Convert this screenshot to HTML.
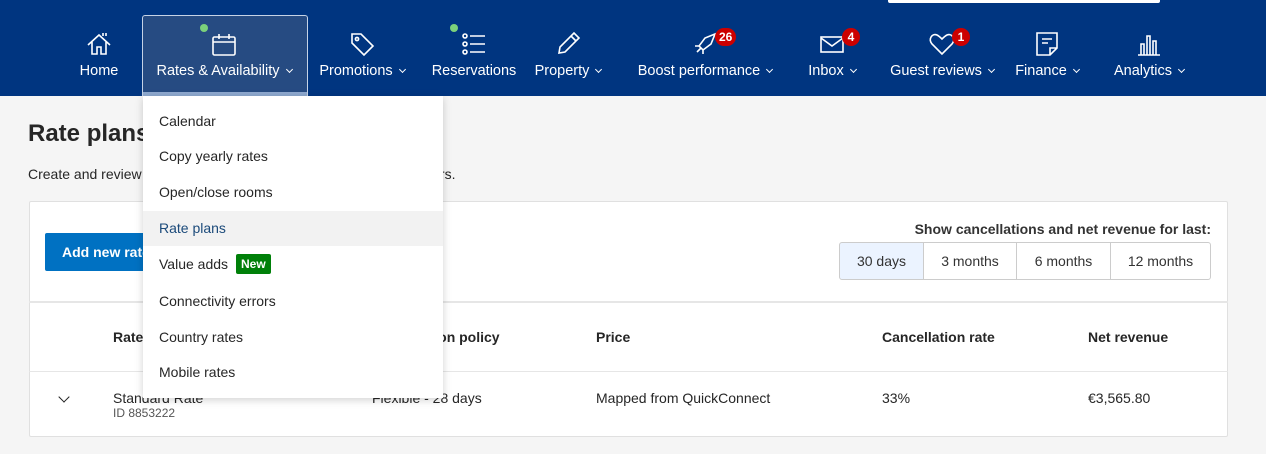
<!DOCTYPE html>
<html><head><meta charset="utf-8"><style>
*{margin:0;padding:0;box-sizing:border-box}
body{width:1266px;height:454px;overflow:hidden;background:#f5f5f5;font-family:"Liberation Sans",Arial,sans-serif;color:#262626;position:relative}
.nav{position:absolute;left:0;top:0;width:1266px;height:96px;background:#003580}
.it{position:absolute;top:0;width:200px;height:96px;text-align:center;color:#fff}
.it svg{position:absolute;left:86px;top:30px;width:28px;height:28px}
.it .lb{position:absolute;left:0;right:0;top:63px;font-size:14.5px;line-height:17px;white-space:nowrap}
.chev{display:inline-block;width:5px;height:5px;border-right:1px solid #fff;border-bottom:1px solid #fff;transform:rotate(45deg);margin-left:7px;position:relative;top:-3px}
.badge{position:absolute;top:28px;height:18px;min-width:18px;padding:0 4px;border-radius:9px;background:#cc0000;color:#fff;font-size:12px;font-weight:bold;line-height:18px;text-align:center}
.dot{position:absolute;width:8px;height:8px;border-radius:50%;background:#7bd17b}
.active{position:absolute;left:142px;top:15px;width:166px;height:81px;background:#264b82;border:1px solid #c6d3e6;border-bottom:none;border-radius:3px 3px 0 0}
.active .bar{position:absolute;left:0;right:0;bottom:0;height:4px;background:#8ea9cf}
.dd{position:absolute;left:143px;top:96px;width:300px;height:302px;background:#fff;box-shadow:0 2px 8px rgba(0,0,0,.18);z-index:5}
.dd div{position:absolute;left:0;width:300px;height:35px;padding-left:16px;line-height:35px;font-size:14px;color:#262626}
.new{display:inline-block;background:#008009;color:#fff;font-size:12px;font-weight:bold;line-height:20px;padding:0 5px;border-radius:2px;margin-left:8px;vertical-align:1px}
.t{position:absolute;white-space:nowrap}
.card{position:absolute;left:29px;top:201px;width:1199px;height:236px;background:#fff;border:1px solid #e0e0e0;border-radius:2px}
.seg{position:absolute;top:242px;height:38px;border:1px solid #ccc;line-height:36px;text-align:center;font-size:14px;color:#333;background:#fff}
</style></head><body>
<div class="nav">
<div style="position:absolute;left:888px;top:0;width:272px;height:3px;background:#fff;border-radius:0 0 2px 2px"></div>
<div class="active"><div class="bar"></div></div>

<div class="it" style="left:-1px"><svg viewBox="0 0 28 28" fill="none" stroke="#fff" stroke-width="1.6"><path d="M3 15 L14 5 L25 15 M7 12 V24 H12 V17 H16 V24 H21 V12"/><path d="M18 6 V3 M21 6 V3"/></svg><div class="lb">Home</div></div>

<div class="it" style="left:124px"><svg viewBox="0 0 28 28" fill="none" stroke="#fff" stroke-width="1.6"><rect x="3" y="7" width="22" height="18" rx="1.5"/><path d="M3 12 H25 M9 4 V9 M19 4 V9"/></svg><div class="dot" style="left:76px;top:24px"></div><div class="lb">Rates &amp; Availability<span class="chev"></span></div></div>

<div class="it" style="left:262px"><svg viewBox="0 0 28 28" fill="none" stroke="#fff" stroke-width="1.6"><path d="M4 4 H13 L25 16 L16 25 L4 13 Z"/><circle cx="9" cy="9" r="1.6"/></svg><div class="lb">Promotions<span class="chev"></span></div></div>

<div class="it" style="left:374px"><svg viewBox="0 0 28 28" fill="none" stroke="#fff" stroke-width="1.6"><circle cx="5" cy="6" r="2"/><circle cx="5" cy="14" r="2"/><circle cx="5" cy="22" r="2"/><path d="M10 6 H25 M10 14 H25 M10 22 H25"/></svg><div class="dot" style="left:76px;top:24px"></div><div class="lb">Reservations</div></div>

<div class="it" style="left:468px"><svg viewBox="0 0 28 28" fill="none" stroke="#fff" stroke-width="1.6"><path d="M5 23 L6 17 L20 3 L25 8 L11 22 Z M17 6 L22 11"/></svg><div class="lb">Property<span class="chev"></span></div></div>

<div class="it" style="left:605px"><svg viewBox="0 0 28 28" fill="none" stroke="#fff" stroke-width="1.6"><path d="M24 4 L14 8 L8 16 L12 20 L20 14 Z M8 16 L4 16 M12 20 L12 24 M6 22 L10 18"/></svg><div class="badge" style="left:110px">26</div><div class="lb">Boost performance<span class="chev"></span></div></div>

<div class="it" style="left:732px"><svg viewBox="0 0 28 28" fill="none" stroke="#fff" stroke-width="1.6"><rect x="3" y="7" width="22" height="15"/><path d="M3 8 L14 16 L25 8"/></svg><div class="badge" style="left:110px">4</div><div class="lb">Inbox<span class="chev"></span></div></div>

<div class="it" style="left:842px"><svg viewBox="0 0 28 28" fill="none" stroke="#fff" stroke-width="1.6"><path d="M14 24 L4 14 C0 9 4 3 9 5 C11 6 13 8 14 9 C15 8 17 6 19 5 C24 3 28 9 24 14 Z"/></svg><div class="badge" style="left:110px">1</div><div class="lb">Guest reviews<span class="chev"></span></div></div>

<div class="it" style="left:947px"><svg viewBox="0 0 28 28" fill="none" stroke="#fff" stroke-width="1.6"><path d="M4 3 H24 V18 L17 25 H4 Z M17 25 V18 H24 M9 9 H19 M9 13 H15"/></svg><div class="lb">Finance<span class="chev"></span></div></div>

<div class="it" style="left:1049px"><svg viewBox="0 0 28 28" fill="none" stroke="#fff" stroke-width="1.6"><path d="M3 25 H25 M6 25 V14 H9 V25 M12 25 V6 H15 V25 M18 25 V11 H21 V25"/></svg><div class="lb">Analytics<span class="chev"></span></div></div>
</div>

<div class="t" style="left:28px;top:120px;font-size:24px;font-weight:bold">Rate plans</div>
<div class="t" style="left:28px;top:166px;font-size:14px">Create and review rate plans to offer different prices to all customers.</div>

<div class="card"></div>
<div style="position:absolute;left:45px;top:233px;width:200px;height:38px;background:#0071c2;border-radius:2px;color:#fff;font-size:14px;font-weight:bold;line-height:38px;padding-left:17px">Add new rate plan</div>
<div class="t" style="left:0;width:1211px;text-align:right;top:221px;font-size:14px;font-weight:bold;color:#333">Show cancellations and net revenue for last:</div>
<div class="seg" style="left:839px;width:85px;background:#ebf3ff;border-radius:3px 0 0 3px">30 days</div>
<div class="seg" style="left:923px;width:94px">3 months</div>
<div class="seg" style="left:1016px;width:95px">6 months</div>
<div class="seg" style="left:1110px;width:101px;border-radius:0 3px 3px 0">12 months</div>
<div style="position:absolute;left:29px;top:301px;width:1199px;height:2px;background:#e6e6e6"></div>
<div style="position:absolute;left:29px;top:371px;width:1199px;height:1px;background:#e6e6e6"></div>
<div class="t" style="left:113px;top:329px;font-size:14px;font-weight:bold">Rate plan</div>
<div class="t" style="left:372px;top:329px;font-size:14px;font-weight:bold">Cancellation policy</div>
<div class="t" style="left:596px;top:329px;font-size:14px;font-weight:bold">Price</div>
<div class="t" style="left:882px;top:329px;font-size:14px;font-weight:bold">Cancellation rate</div>
<div class="t" style="left:1088px;top:329px;font-size:14px;font-weight:bold">Net revenue</div>
<div style="position:absolute;left:60px;top:393px;width:8px;height:8px;border-right:1.6px solid #222;border-bottom:1.6px solid #222;transform:rotate(45deg)"></div>
<div class="t" style="left:113px;top:390px;font-size:14px">Standard Rate</div>
<div class="t" style="left:113px;top:406px;font-size:12px;color:#555">ID 8853222</div>
<div class="t" style="left:372px;top:390px;font-size:14px">Flexible - 28 days</div>
<div class="t" style="left:596px;top:390px;font-size:14px">Mapped from QuickConnect</div>
<div class="t" style="left:882px;top:390px;font-size:14px">33%</div>
<div class="t" style="left:1088px;top:390px;font-size:14px">€3,565.80</div>

<div class="dd">
<div style="top:8px">Calendar</div>
<div style="top:43px">Copy yearly rates</div>
<div style="top:79px">Open/close rooms</div>
<div style="top:115px;background:#f2f2f2;color:#1b4a7a">Rate plans</div>
<div style="top:151px">Value adds<span class="new">New</span></div>
<div style="top:188px">Connectivity errors</div>
<div style="top:224px">Country rates</div>
<div style="top:259px">Mobile rates</div>
</div>
</body></html>
